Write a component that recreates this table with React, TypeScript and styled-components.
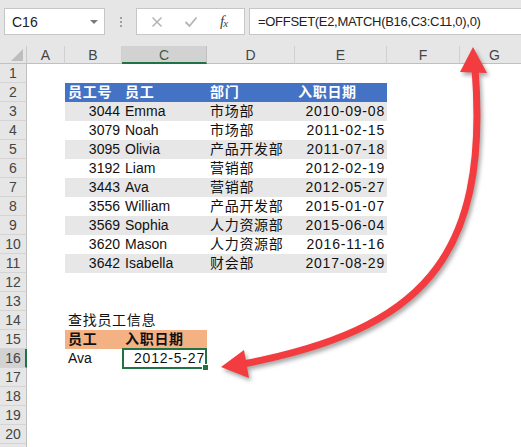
import React from 'react';
import styled, { createGlobalStyle } from 'styled-components';

const Global = createGlobalStyle`
  html, body { margin: 0; padding: 0; background: #fff; }
  body { font-family: "Liberation Sans", "Noto Sans CJK SC", sans-serif; overflow: hidden; }
`;

const Page = styled.div`
  position: relative;
  width: 521px;
  height: 447px;
  overflow: hidden;
  background: #fff;
  display: flex;
  flex-direction: column;
`;

const TopBar = styled.div`
  height: 46px;
  flex: none;
  box-sizing: border-box;
  background: #e6e6e6;
  display: flex;
  align-items: flex-start;
  padding: 8px 0 0 4px;
`;

const NameBox = styled.div`
  width: 101px;
  height: 27px;
  box-sizing: border-box;
  background: #fff;
  border: 1px solid #c6c6c6;
  display: flex;
  align-items: center;
  justify-content: space-between;
  padding: 0 6px 0 7px;
  font-size: 14px;
  color: #222;
`;

const DropArrow = styled.span`
  width: 0;
  height: 0;
  border-left: 4px solid transparent;
  border-right: 4px solid transparent;
  border-top: 4px solid #7a7a7a;
`;

const Grip = styled.div`
  width: 31px;
  height: 27px;
  display: flex;
  flex-direction: column;
  align-items: center;
  justify-content: center;
  gap: 2px;
  & > span {
    width: 2px;
    height: 2px;
    background: #a0a0a0;
  }
`;

const FxBox = styled.div`
  width: 109px;
  height: 27px;
  box-sizing: border-box;
  background: #fff;
  border: 1px solid #c6c6c6;
  display: flex;
  align-items: center;
  padding-left: 14px;
  gap: 21px;
`;

const FxText = styled.span`
  font-family: "Liberation Serif", serif;
  font-style: italic;
  font-size: 15px;
  color: #444;
  margin-left: 1px;
  letter-spacing: -1px;
  & > sub {
    font-size: 11px;
    vertical-align: -1px;
  }
`;

const Formula = styled.div`
  flex: 1;
  height: 27px;
  margin-left: 4px;
  box-sizing: border-box;
  background: #fff;
  border: 1px solid #c6c6c6;
  border-right: none;
  display: flex;
  align-items: center;
  padding-left: 8px;
  font-size: 13px;
  letter-spacing: -0.3px;
  color: #222;
  white-space: nowrap;
`;

const Sheet = styled.div`
  display: grid;
  grid-template-columns: 27px 38px 57px 85px 88px 92px 73px 70px;
  grid-template-rows: 18px repeat(21, 19px);
  background: #fff;
`;

const Corner = styled.div`
  background: #e6e6e6;
  box-sizing: border-box;
  border-right: 1px solid #c8c8c8;
  border-bottom: 1px solid #c0c0c0;
  position: relative;
  &::after {
    content: '';
    position: absolute;
    right: 3px;
    bottom: 2px;
    width: 0;
    height: 0;
    border-left: 12px solid transparent;
    border-bottom: 12px solid #bdbdbd;
  }
`;

const ColHead = styled.div<{ $active?: boolean }>`
  box-sizing: border-box;
  background: ${(p) => (p.$active ? '#d2d2d2' : '#e6e6e6')};
  border-right: 1px solid ${(p) => (p.$active ? '#c0c0c0' : '#d0d0d0')};
  border-bottom: ${(p) => (p.$active ? '2px solid #217346' : '1px solid #c0c0c0')};
  display: flex;
  align-items: center;
  justify-content: center;
  font-size: 14px;
  color: ${(p) => (p.$active ? '#3d5e48' : '#444')};
  padding-top: 1px;
`;

const RowNum = styled.div<{ $active?: boolean }>`
  box-sizing: border-box;
  background: ${(p) => (p.$active ? '#d2d2d2' : '#e6e6e6')};
  border-right: ${(p) => (p.$active ? '2px solid #217346' : '1px solid #c0c0c0')};
  border-bottom: 1px solid #d4d4d4;
  display: flex;
  align-items: center;
  justify-content: center;
  font-size: 14px;
  color: #444;
  padding-left: ${(p) => (p.$active ? '1px' : '0')};
`;

const Cell = styled.div<{
  $bg?: string;
  $color?: string;
  $bold?: boolean;
  $align?: 'left' | 'right';
  $ls?: number;
}>`
  position: relative;
  box-sizing: border-box;
  background: ${(p) => p.$bg || 'transparent'};
  color: ${(p) => p.$color || '#111'};
  font-weight: ${(p) => (p.$bold ? 700 : 400)};
  font-size: 14px;
  line-height: 19px;
  text-align: ${(p) => p.$align || 'left'};
  letter-spacing: ${(p) => p.$ls || 0}px;
  padding: 0 ${(p) => (p.$align === 'right' ? '2px' : '3px')};
  white-space: nowrap;
  overflow: visible;
  z-index: 1;
`;

const Selection = styled.div`
  position: absolute;
  left: 0;
  top: -1px;
  right: 0;
  bottom: -1px;
  border: 2px solid #217346;
  pointer-events: none;
  &::after {
    content: '';
    position: absolute;
    right: -4px;
    bottom: -4px;
    width: 5px;
    height: 5px;
    background: #217346;
    border: 1px solid #fff;
  }
`;

const Overlay = styled.svg`
  position: absolute;
  left: 0;
  top: 0;
  pointer-events: none;
  z-index: 10;
  filter: drop-shadow(2px 3px 2px rgba(0, 0, 0, 0.35));
`;

type Spec = {
  t: string;
  align?: 'left' | 'right';
  ls?: number;
  bold?: boolean;
  color?: string;
  sel?: boolean;
};

type RowSpec = { bg?: string; bgCols?: number; cells: (Spec | null)[] };

const BLUE = '#4472c4';
const STRIPE = '#e7e7e7';
const ORANGE = '#f4b183';
const CJK = 0.7;
const DATE = 0.8;

const people: [string, string, string, string][] = [
  ['3044', 'Emma', '市场部', '2010-09-08'],
  ['3079', 'Noah', '市场部', '2011-02-15'],
  ['3095', 'Olivia', '产品开发部', '2011-07-18'],
  ['3192', 'Liam', '营销部', '2012-02-19'],
  ['3443', 'Ava', '营销部', '2012-05-27'],
  ['3556', 'William', '产品开发部', '2015-01-07'],
  ['3569', 'Sophia', '人力资源部', '2015-06-04'],
  ['3620', 'Mason', '人力资源部', '2016-11-16'],
  ['3642', 'Isabella', '财会部', '2017-08-29'],
];

const rows: Record<number, RowSpec> = {
  2: {
    bg: BLUE,
    bgCols: 4,
    cells: [
      null,
      { t: '员工号', ls: CJK, bold: true, color: '#fff' },
      { t: '员工', ls: CJK, bold: true, color: '#fff' },
      { t: '部门', ls: CJK, bold: true, color: '#fff' },
      { t: '入职日期', ls: CJK, bold: true, color: '#fff' },
    ],
  },
  14: { cells: [null, { t: '查找员工信息', ls: CJK }] },
  15: {
    bg: ORANGE,
    bgCols: 2,
    cells: [null, { t: '员工', ls: CJK, bold: true }, { t: '入职日期', ls: CJK, bold: true }],
  },
  16: {
    cells: [null, { t: 'Ava' }, { t: '2012-5-27', align: 'right', ls: DATE, sel: true }],
  },
};

people.forEach((p, i) => {
  const r = i + 3;
  rows[r] = {
    bg: i % 2 === 0 ? STRIPE : undefined,
    bgCols: 4,
    cells: [
      null,
      { t: p[0], align: 'right' },
      { t: p[1] },
      { t: p[2], ls: CJK },
      { t: p[3], align: 'right', ls: DATE },
    ],
  };
});

const LETTERS = ['A', 'B', 'C', 'D', 'E', 'F', 'G'];

const XIcon = () => (
  <svg width="12" height="12" viewBox="0 0 12 12">
    <path d="M1.5 1.5 L10.5 10.5 M10.5 1.5 L1.5 10.5" stroke="#b4b4b4" strokeWidth="1.5" fill="none" />
  </svg>
);

const CheckIcon = () => (
  <svg width="14" height="12" viewBox="0 0 14 12">
    <path d="M1.5 6 L5.5 10 L12.5 1.5" stroke="#b4b4b4" strokeWidth="1.8" fill="none" />
  </svg>
);

const Arrow = () => (
  <Overlay width="521" height="447" viewBox="0 0 521 447">
    <path
      d="M475 68 C 490 260 420 330 243 364"
      stroke="#f23c3f"
      strokeWidth="7"
      fill="none"
      strokeLinecap="round"
    />
    <polygon points="473,47 460,72 487,73" fill="#f23c3f" />
    <polygon points="221,367 244,350 249,378" fill="#f23c3f" />
  </Overlay>
);

export default function App() {
  const cells: React.ReactNode[] = [];
  cells.push(<Corner key="corner" />);
  LETTERS.forEach((l) => cells.push(<ColHead key={'h' + l} $active={l === 'C'}>{l}</ColHead>));
  for (let r = 1; r <= 21; r++) {
    cells.push(
      <RowNum key={'r' + r} $active={r === 16}>
        {r}
      </RowNum>
    );
    const spec = rows[r];
    for (let c = 0; c < 7; c++) {
      const s = spec?.cells[c] || null;
      const bg = spec?.bg && c >= 1 && c <= (spec.bgCols || 0) ? spec.bg : undefined;
      cells.push(
        <Cell
          key={`c${r}-${c}`}
          $bg={bg}
          $align={s?.align}
          $ls={s?.ls}
          $bold={s?.bold}
          $color={s?.color}
        >
          {s?.t}
          {s?.sel && <Selection />}
        </Cell>
      );
    }
  }
  return (
    <Page>
      <Global />
      <TopBar>
        <NameBox>
          <span>C16</span>
          <DropArrow />
        </NameBox>
        <Grip>
          <span />
          <span />
          <span />
        </Grip>
        <FxBox>
          <XIcon />
          <CheckIcon />
          <FxText>
            f<sub>x</sub>
          </FxText>
        </FxBox>
        <Formula>=OFFSET(E2,MATCH(B16,C3:C11,0),0)</Formula>
      </TopBar>
      <Sheet>{cells}</Sheet>
      <Arrow />
    </Page>
  );
}
